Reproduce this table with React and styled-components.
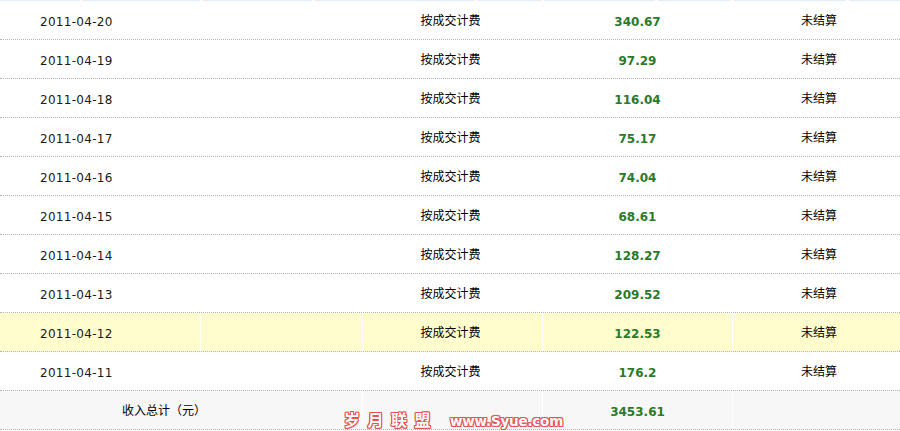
import React from "react";
import styled, { createGlobalStyle } from "styled-components";

const Global = createGlobalStyle`
  html, body { margin: 0; padding: 0; background: #fff; }
  body { width: 900px; overflow: hidden; }
`;

const Table = styled.div`
  width: 900px;
  display: flex;
  flex-direction: column;
  font-family: "DejaVu Sans", Verdana, "Noto Sans CJK SC", sans-serif;
  font-size: 12px;
  color: #111;
`;

const HeaderEdge = styled.div`
  display: flex;
  height: 1px;
  gap: 3px;
`;

const EdgeSeg = styled.div`
  background: #e3ecf3;
  flex: ${(p) => p.$w} 0 0;
`;

const Row = styled.div`
  position: relative;
  display: grid;
  grid-template-columns: 200px 162px 180px 190px 168px;
  height: 38px;
  border-bottom: 1px dotted #b4b4b4;
  background: ${(p) => (p.$hl ? "#fffdcd" : p.$foot ? "#f7f7f7" : "#fff")};
`;

const Cell = styled.div`
  display: flex;
  align-items: center;
  justify-content: ${(p) => (p.$left ? "flex-start" : "center")};
  padding-left: ${(p) => (p.$left ? "40px" : p.$pl || "0")};
  padding-right: ${(p) => p.$pr || "0"};
  grid-column: ${(p) => (p.$span ? `span ${p.$span}` : "auto")};
  border-left: ${(p) => (p.$first ? "none" : "1px solid #fff")};
`;

const DateText = styled.span`
  font-family: "DejaVu Sans", Verdana, sans-serif;
  font-size: 12px;
  line-height: 14px;
  letter-spacing: 0.3px;
  color: #1a1a1a;
  margin-top: 3px;
`;

const CnText = styled.span`
  font-family: "Noto Sans CJK SC", sans-serif;
  font-size: 12px;
  line-height: 14px;
  color: #000;
`;

const Amount = styled.span`
  font-family: "DejaVu Sans", Verdana, sans-serif;
  font-weight: bold;
  font-size: 12px;
  line-height: 14px;
  color: #2a7a2a;
  margin-top: 4px;
`;

const red = "#e05454";

const Watermark = styled.div`
  position: absolute;
  left: 344px;
  top: 16px;
  display: flex;
  align-items: baseline;
  gap: 12px;
  color: #fffafa;
  text-shadow: 1px 0 0 ${red}, -1px 0 0 ${red}, 0 1px 0 ${red}, 0 -1px 0 ${red},
    1px 1px 0 ${red}, -1px -1px 0 ${red}, 1px -1px 0 ${red}, -1px 1px 0 ${red};
  pointer-events: none;
  white-space: nowrap;
`;

const WmCn = styled.span`
  font-family: "Noto Sans CJK SC", sans-serif;
  font-weight: bold;
  font-size: 16px;
  letter-spacing: 7.5px;
`;

const WmEn = styled.span`
  font-family: "DejaVu Sans", sans-serif;
  font-weight: bold;
  font-size: 13.5px;
  letter-spacing: -0.2px;
`;

const rows = [
  ["2011-04-20", "340.67"],
  ["2011-04-19", "97.29"],
  ["2011-04-18", "116.04"],
  ["2011-04-17", "75.17"],
  ["2011-04-16", "74.04"],
  ["2011-04-15", "68.61"],
  ["2011-04-14", "128.27"],
  ["2011-04-13", "209.52"],
  ["2011-04-12", "122.53"],
  ["2011-04-11", "176.2"],
];

const edges = [80, 118, 110, 160, 64, 112, 73, 113, 51];

export default function App() {
  return (
    <>
      <Global />
      <Table>
        <HeaderEdge>
          {edges.map((w, i) => (
            <EdgeSeg key={i} $w={w} />
          ))}
        </HeaderEdge>
        {rows.map(([d, a]) => (
          <Row key={d} $hl={d === "2011-04-12"}>
            <Cell $left $first>
              <DateText>{d}</DateText>
            </Cell>
            <Cell />
            <Cell $pr="4px">
              <CnText>按成交计费</CnText>
            </Cell>
            <Cell>
              <Amount>{a}</Amount>
            </Cell>
            <Cell $pl="5px">
              <CnText>未结算</CnText>
            </Cell>
          </Row>
        ))}
        <Row $foot>
          <Cell $first $span={2} $pr="34px">
            <CnText>收入总计（元）</CnText>
          </Cell>
          <Cell />
          <Cell>
            <Amount>3453.61</Amount>
          </Cell>
          <Cell />
          <Watermark>
            <WmCn>岁月联盟</WmCn>
            <WmEn>www.Syue.com</WmEn>
          </Watermark>
        </Row>
      </Table>
    </>
  );
}
